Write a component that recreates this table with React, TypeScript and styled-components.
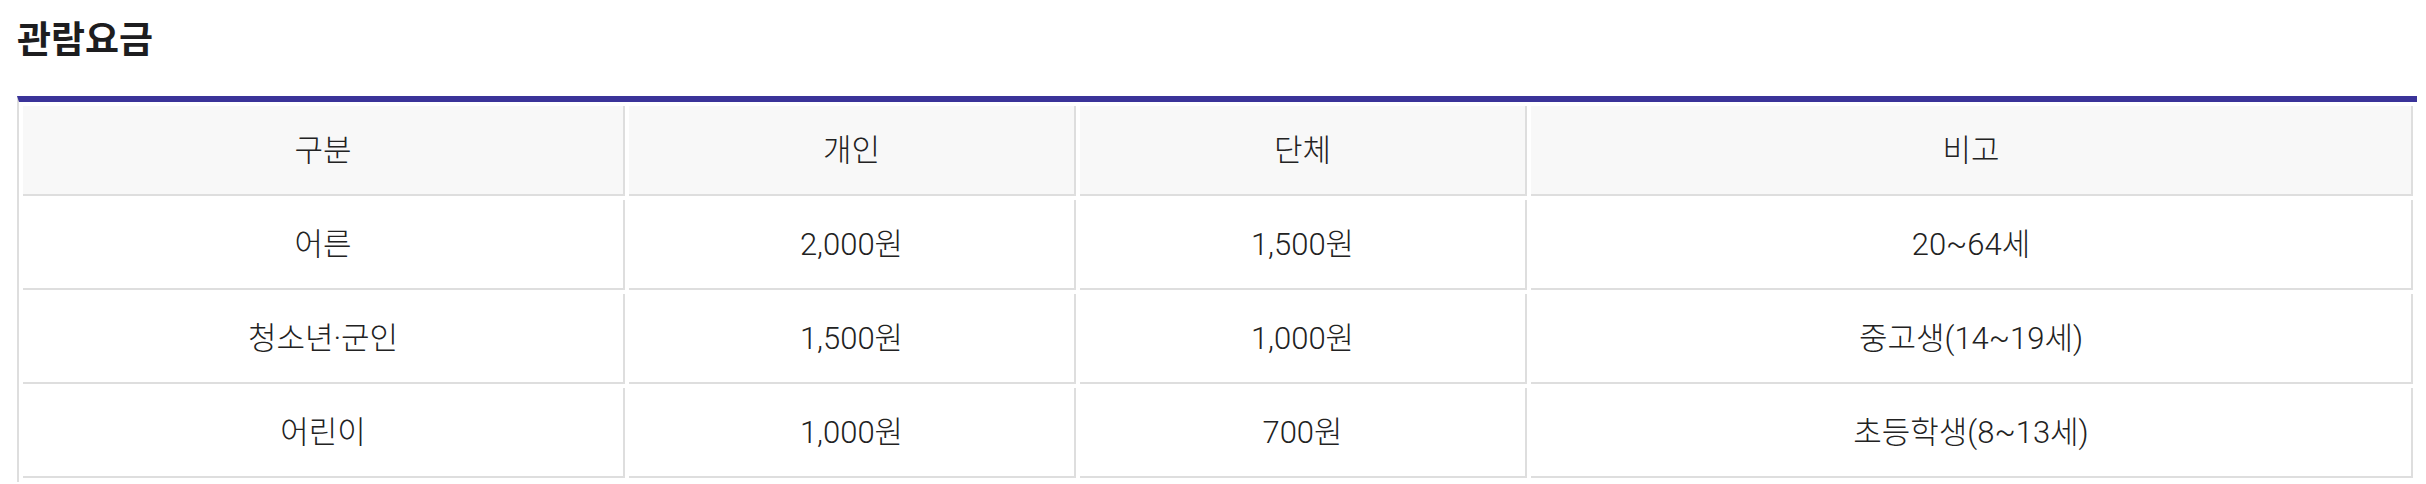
import * as React from 'react';
import styled, { createGlobalStyle } from 'styled-components';

const GlobalStyle = createGlobalStyle`
  body {
    margin: 0;
    background: #fff;
    font-family: Roboto, 'Noto Sans CJK KR', sans-serif;
    color: #222;
  }
`;

const Section = styled.section`
  padding: 19px 0 0 17px;
`;

const Title = styled.h2`
  margin: 0 0 40px;
  font-family: 'Noto Sans CJK KR', sans-serif;
  font-size: 37px;
  line-height: 1;
  font-weight: 700;
  color: #1d1d1f;
`;

const FeeTable = styled.table`
  width: 2400px;
  table-layout: fixed;
  border-collapse: separate;
  border-spacing: 4px;
  border-top: 6px solid #3a3399;
  border-left: 2px solid #dedede;
`;

const Cell = styled.td<{ $w: number; $head?: boolean }>`
  box-sizing: border-box;
  width: ${(p) => p.$w}px;
  height: 90px;
  padding: 0 0 6px;
  text-align: center;
  vertical-align: middle;
  font-size: 31px;
  font-weight: 300;
  color: #222;
  background: ${(p) => (p.$head ? '#f8f8f8' : '#fff')};
  border-right: 2px solid #dedede;
  border-bottom: 2px solid #dedede;
`;

const widths = [602, 447, 447, 882];

const head = ['구분', '개인', '단체', '비고'];

const rows = [
  ['어른', '2,000원', '1,500원', '20~64세'],
  ['청소년·군인', '1,500원', '1,000원', '중고생(14~19세)'],
  ['어린이', '1,000원', '700원', '초등학생(8~13세)'],
];

export default function App() {
  return (
    <Section>
      <GlobalStyle />
      <Title>관람요금</Title>
      <FeeTable>
        <thead>
          <tr>
            {head.map((h, i) => (
              <Cell as="th" key={h} $w={widths[i]} $head>
                {h}
              </Cell>
            ))}
          </tr>
        </thead>
        <tbody>
          {rows.map((r) => (
            <tr key={r[0]}>
              {r.map((c, i) => (
                <Cell key={i} $w={widths[i]}>
                  {c}
                </Cell>
              ))}
            </tr>
          ))}
        </tbody>
      </FeeTable>
    </Section>
  );
}
